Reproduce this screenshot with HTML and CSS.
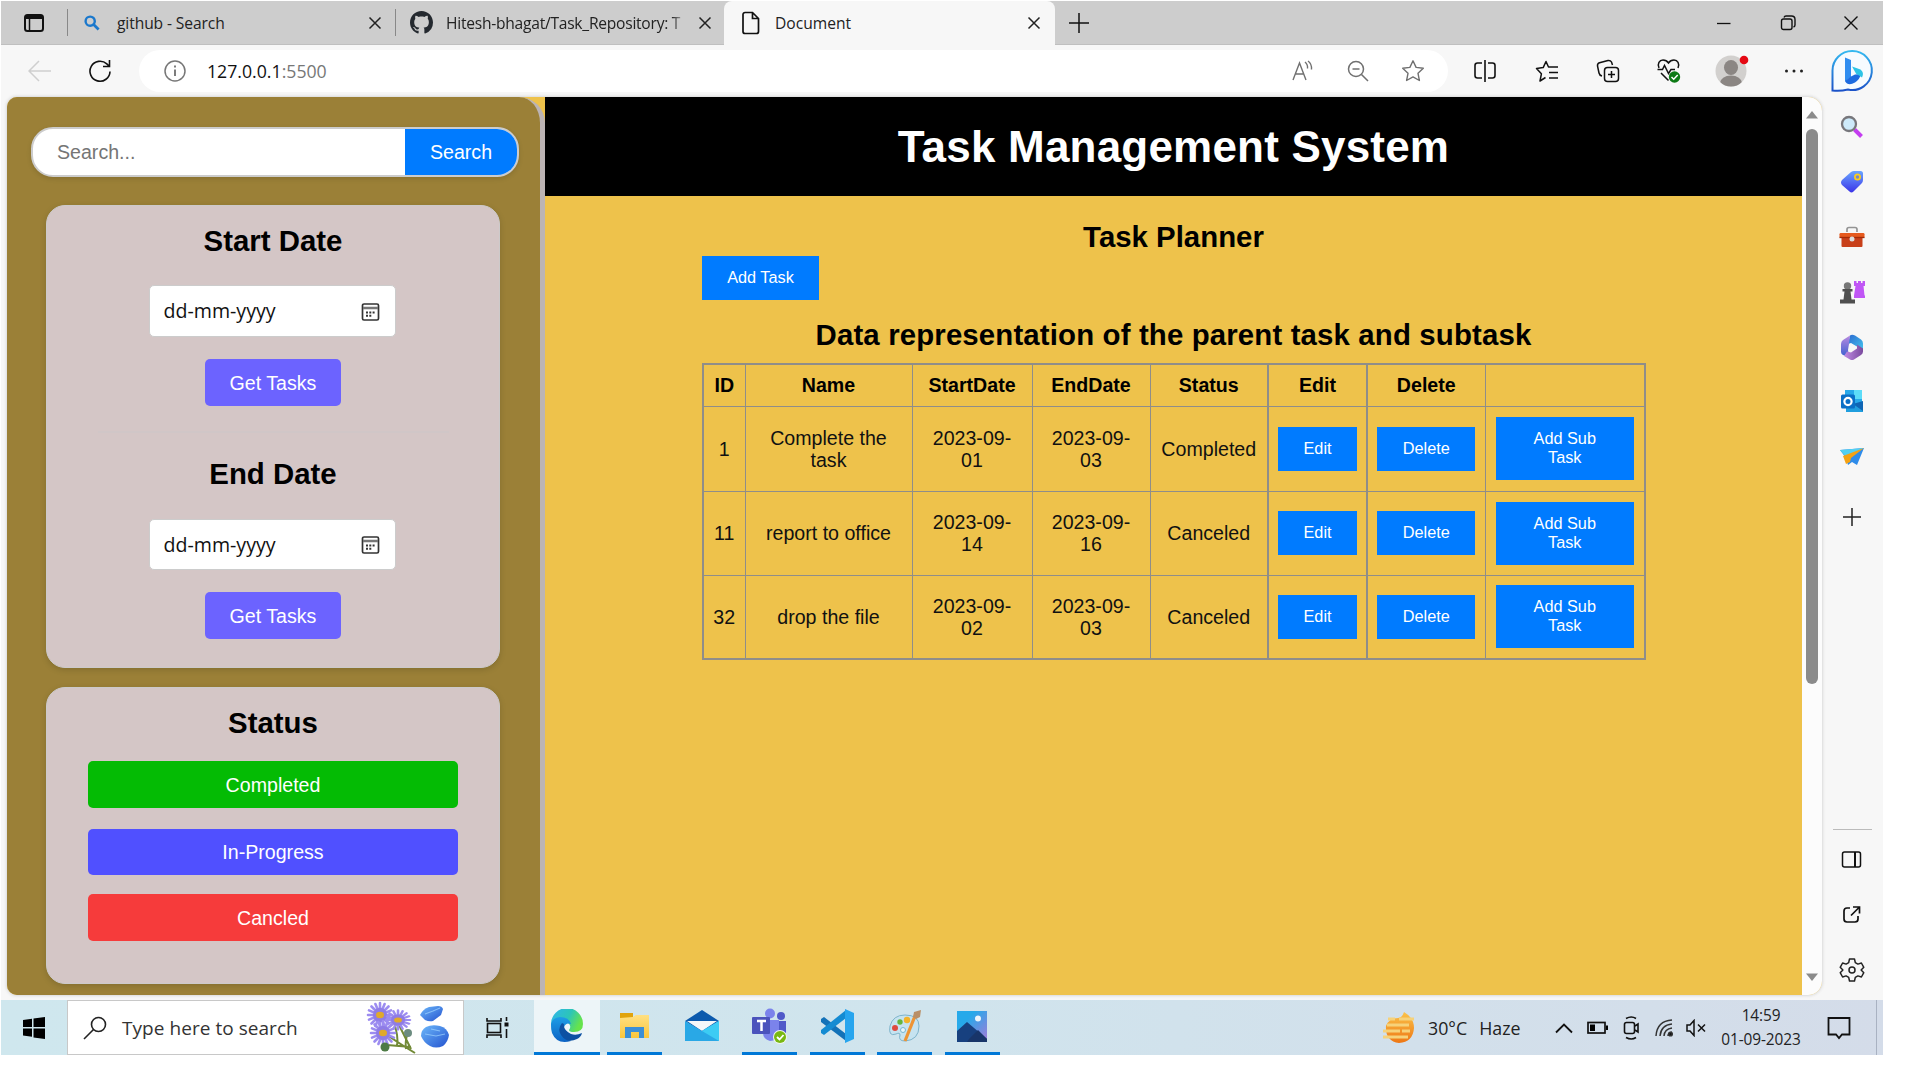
FILE: index.html
```html
<!DOCTYPE html>
<html lang="en">
<head>
<meta charset="utf-8">
<title>Document</title>
<link rel="stylesheet" href="styles.css">
</head>
<body>
<svg class="defs" width="0" height="0" aria-hidden="true">
  <defs>
    <symbol id="x" viewBox="0 0 14 14"><path d="M1.500 1.500l11 11M12.500 1.500l-11 11" fill="none" stroke="#222" stroke-width="1.500"/></symbol>
    <symbol id="cal" viewBox="0 0 20 22"><rect x="1.500" y="2" width="16" height="16" rx="1.500" fill="none" stroke="#333" stroke-width="1.700"/><path d="M2 6h15" stroke="#777" stroke-width="2.500"/><path d="M5 10.500h9M5 13.800h6" stroke="#333" stroke-width="2" stroke-dasharray="2 1.300"/></symbol>
    <linearGradient id="gBlue" x1="0" y1="0" x2="0" y2="1"><stop offset="0" stop-color="#6aa5ff"/><stop offset="1" stop-color="#3b34e8"/></linearGradient>
    <linearGradient id="gBing" x1="0" y1="0" x2="0" y2="1"><stop offset="0" stop-color="#35b9f0"/><stop offset="1" stop-color="#1b52c8"/></linearGradient>
    <linearGradient id="gOffA" x1="0" y1="0" x2="1" y2="1"><stop offset="0" stop-color="#2b6ad0"/><stop offset="1" stop-color="#44c4ee"/></linearGradient>
    <linearGradient id="gOffB" x1="0" y1="0" x2="0" y2="1"><stop offset="0" stop-color="#b98ae0"/><stop offset="1" stop-color="#3a5fd0"/></linearGradient>
    <linearGradient id="gOffC" x1="0" y1="0" x2="1" y2="0"><stop offset="0" stop-color="#c08be4"/><stop offset="1" stop-color="#7a4a9e"/></linearGradient>
    <linearGradient id="gEdge" x1="0" y1="0" x2="1" y2="0.400"><stop offset="0" stop-color="#2fb4ee"/><stop offset="0.600" stop-color="#2cc5b8"/><stop offset="1" stop-color="#66e34c"/></linearGradient>
    <linearGradient id="gEdge2" x1="0" y1="0" x2="0" y2="1"><stop offset="0" stop-color="#1d9de6"/><stop offset="1" stop-color="#0c63c4"/></linearGradient>
    <linearGradient id="gSun" x1="0" y1="0" x2="0" y2="1"><stop offset="0" stop-color="#fbc34a"/><stop offset="1" stop-color="#ee7714"/></linearGradient>
    <linearGradient id="gPhoto" x1="0" y1="0" x2="1" y2="1"><stop offset="0.300" stop-color="#26a9ea"/><stop offset="1" stop-color="#a67ad8"/></linearGradient>
    <linearGradient id="gFold" x1="0" y1="0" x2="0" y2="1"><stop offset="0" stop-color="#ffe082"/><stop offset="1" stop-color="#fbc63c"/></linearGradient>
    <linearGradient id="gStone" x1="0" y1="0" x2="1" y2="1"><stop offset="0" stop-color="#6cb8fa"/><stop offset="1" stop-color="#2352cf"/></linearGradient>
    <g id="petals"><path d="M0-12v24M-12 0h24M-8.500-8.500l17 17M8.500-8.500l-17 17M-4.600-11l9.200 22M4.600-11l-9.200 22M-11-4.600l22 9.200M-11 4.600l22-9.200" stroke="#9c8cf0" stroke-width="2.600" stroke-linecap="round"/><circle r="7" fill="#7f6bdc" opacity=".5"/><ellipse rx="4" ry="3.200" fill="#e0a92b"/></g>
  </defs>
</svg>

<div class="desktop">
  <header class="tabs">
    <div class="tab-menu"><svg width="22" height="20" viewBox="0 0 22 20"><rect x="2" y="2" width="18" height="16" rx="2.500" fill="none" stroke="#111" stroke-width="2"/><path d="M2 4h18" stroke="#111" stroke-width="4"/><path d="M6.500 5v13" stroke="#111" stroke-width="1.500"/></svg></div>
    <div class="tab tab-first">
      <svg class="fav" width="16" height="16" viewBox="0 0 16 16"><circle cx="6.200" cy="6.200" r="4.600" fill="none" stroke="#1b78cc" stroke-width="2.400"/><path d="M9.600 9.600l5 5" stroke="#1b78cc" stroke-width="2.800"/></svg>
      <span class="tab-title">github - Search</span><svg class="close" width="14" height="14"><use href="#x"/></svg>
    </div>
    <div class="tab tab-second">
      <svg class="fav" width="23" height="23" viewBox="0 0 16 16"><path fill="#24292f" d="M8 0C3.580 0 0 3.580 0 8c0 3.540 2.290 6.530 5.470 7.590.400.070.550-.170.550-.380 0-.190-.010-.820-.010-1.490-2.010.370-2.530-.490-2.690-.940-.090-.230-.480-.940-.820-1.130-.280-.150-.680-.520-.010-.530.630-.010 1.080.580 1.230.820.720 1.210 1.870.870 2.330.660.070-.520.280-.870.510-1.070-1.780-.200-3.640-.890-3.640-3.950 0-.870.310-1.590.820-2.150-.080-.200-.360-1.020.080-2.120 0 0 .670-.210 2.200.820.640-.180 1.320-.270 2-.270s1.360.090 2 .270c1.530-1.040 2.200-.820 2.200-.820.440 1.100.160 1.920.080 2.120.510.560.820 1.270.820 2.150 0 3.070-1.870 3.750-3.650 3.950.290.250.540.730.540 1.480 0 1.070-.010 1.930-.010 2.200 0 .210.150.460.550.380A8.010 8.010 0 0 0 16 8c0-4.420-3.580-8-8-8z"/></svg>
      <span class="tab-title fade">Hitesh-bhagat/Task_Repository: T</span><svg class="close" width="14" height="14"><use href="#x"/></svg>
    </div>
    <div class="tab tab-active">
      <svg class="fav" width="20" height="24" viewBox="0 0 20 24"><path d="M4 1.500h7.500l6 6v13a2 2 0 0 1-2 2H4a2 2 0 0 1-2-2v-17a2 2 0 0 1 2-2zM11.500 1.500v6h6" fill="none" stroke="#111" stroke-width="1.700"/></svg>
      <span class="tab-title">Document</span><svg class="close" width="14" height="14"><use href="#x"/></svg>
    </div>
    <div class="cell new-tab"><svg width="20" height="20"><path d="M10 0v20M0 10h20" stroke="#111" stroke-width="1.500"/></svg></div>
    <div class="window-buttons">
      <div class="cell"><svg width="14" height="14"><path d="M0 7.500h13.500" stroke="#111" stroke-width="1.300"/></svg></div>
      <div class="cell"><svg width="16" height="16" fill="none" stroke="#111" stroke-width="1.400"><rect x="1.500" y="4" width="10.500" height="10.500" rx="2"/><path d="M4 2.500Q4.500 1 6 1h5.500Q15 1 15 4.500V10q0 1.500-1.500 2"/></svg></div>
      <div class="cell"><svg width="16" height="16"><path d="M1.500 1.500l13 13M14.500 1.500l-13 13" stroke="#111" stroke-width="1.400"/></svg></div>
    </div>
  </header>

  <nav class="toolbar">
    <div class="cell"><svg width="24" height="22" fill="none" stroke="#cfcfcf" stroke-width="1.500"><path d="M1 11h22M11 1L1 11l10 10"/></svg></div>
    <div class="cell reload"><svg width="24" height="24" fill="none" stroke="#111" stroke-width="1.600"><path d="M22 12.500a10 10 0 1 1-3.200-7.600L21 7M21.500 1v6.500H15"/></svg></div>
    <div class="address">
      <svg width="24" height="24" fill="none" stroke="#777" stroke-width="1.500"><circle cx="12" cy="12" r="10"/><path d="M12 10.500v6.500M12 6.500v2" stroke-width="1.900"/></svg>
      <span class="url">127.0.0.1<em>:5500</em></span>
      <div class="cell"><svg width="24" height="24" fill="none" stroke="#707070" stroke-width="1.400"><path d="M2 21L8.500 4 15 21M4.500 15h8M14 3q3 2.500 2.500 6.500M17 2q4 3 3.500 8.500"/></svg></div>
      <div class="cell"><svg width="24" height="24" fill="none" stroke="#707070" stroke-width="1.500"><circle cx="10" cy="10" r="7.500"/><path d="M15.500 15.500L22 22M6.500 10h7"/></svg></div>
      <div class="cell"><svg width="24" height="24" fill="none" stroke="#707070" stroke-width="1.400" stroke-linejoin="round"><path d="M12 1.800l3.100 6.600 7.200.9-5.300 5 1.400 7.200-6.400-3.600-6.400 3.600L7 14.300l-5.300-5 7.200-.9z"/></svg></div>
    </div>
    <div class="cell"><svg width="24" height="24" fill="none" stroke="#111" stroke-width="1.600"><path d="M9 4H4.500Q2 4 2 6.500v10Q2 19 4.500 19H9M15 4h4.500Q22 4 22 6.500v10q0 2.500-2.500 2.500H15M12 1v22"/></svg></div>
    <div class="cell"><svg width="24" height="24" fill="none" stroke="#111" stroke-width="1.500" stroke-linejoin="round"><path d="M10.500 18.500L5 22l1.400-7.200L1.500 9.500l6.700-.9L11 2.500l2.500 5.500h9.500M14 13.500h9M14 19h9"/></svg></div>
    <div class="cell"><svg width="24" height="24" fill="none" stroke="#111" stroke-width="1.500"><rect x="8.500" y="8.500" width="14" height="14" rx="3"/><path d="M15.500 12v7M12 15.500h7M6 17Q3.500 16.500 3 14L1.500 7Q1.300 4.500 3.500 3.800L12 1.500q2.500-.3 3.500 1.500l1 3"/></svg></div>
    <div class="cell"><svg width="26" height="26" fill="none" stroke="#111" stroke-width="1.500"><path d="M3 10C1 5.500 3.500 2 7 2q3.500 0 5.500 3 2-3 5.500-3c3.500 0 6 3.500 4 8M1.500 11.500h5l2-4 4 8 2.500-4h4M5 15l7.500 7.500"/><circle cx="18.500" cy="19" r="5.700" fill="#0d7a15" stroke="none"/><path d="M15.500 19l2.200 2.200 4-4.200" stroke="#fff"/></svg></div>
    <div class="cell"><svg width="36" height="38" viewBox="0 0 36 38"><clipPath id="av"><circle cx="18" cy="19" r="15.500"/></clipPath><circle cx="18" cy="19" r="15.500" fill="#d2d0ce"/><g clip-path="url(#av)" fill="#8b8683"><ellipse cx="18" cy="15.500" rx="7" ry="7.500"/><ellipse cx="18" cy="31" rx="11" ry="7.500"/></g><circle cx="31" cy="8" r="4.300" fill="#e50914"/></svg></div>
    <div class="cell"><svg width="20" height="6" fill="#222"><circle cx="2.500" cy="3" r="1.500"/><circle cx="10" cy="3" r="1.500"/><circle cx="17.500" cy="3" r="1.500"/></svg></div>
    <div class="cell"><svg width="44" height="44" viewBox="0 0 44 44"><path d="M22 2a19.500 19.500 0 1 1-4 38.500Q10 42.500 2.500 41.500V21.500A19.500 19.500 0 0 1 22 2z" fill="#f6fbff" stroke="url(#gBing)" stroke-width="2"/><path d="M15 8.500l6 2.500v17l-6 4.500z" fill="#2f8df0"/><path d="M15 32l6-4.500 4-2 6-.5q-1 5-6 8.500-7 4-10-1.500z" fill="#1d6be0"/><path d="M22 17.500l8.500 3q4 3 1.500 8l-6-4z" fill="#2cc3e6"/></svg></div>
  </nav>

  <div class="middle">
    <div class="viewport">
      <aside class="sidebar">
        <div class="search"><span class="placeholder">Search...</span><span class="search-button">Search</span></div>
        <section class="card dates">
          <h2>Start Date</h2>
          <div class="date"><span>dd-mm-yyyy</span><svg width="20" height="22"><use href="#cal"/></svg></div>
          <div class="get">Get Tasks</div>
          <hr>
          <h2>End Date</h2>
          <div class="date date-end"><span>dd-mm-yyyy</span><svg width="20" height="22"><use href="#cal"/></svg></div>
          <div class="get">Get Tasks</div>
        </section>
        <section class="card status">
          <h2>Status</h2>
          <div class="state completed">Completed</div>
          <div class="state progress">In-Progress</div>
          <div class="state canceled">Cancled</div>
        </section>
      </aside>
      <main class="main">
        <h1>Task Management System</h1>
        <div class="planner">
          <h2>Task Planner</h2>
          <span class="btn add">Add Task</span>
          <h2 class="data-title">Data representation of the parent task and subtask</h2>
          <table>
            <colgroup><col class="c-id"><col class="c-name"><col class="c-start"><col class="c-end"><col class="c-status"><col class="c-edit"><col class="c-delete"><col class="c-sub"></colgroup>
            <tr class="head"><th>ID</th><th>Name</th><th>StartDate</th><th>EndDate</th><th>Status</th><th class="thick">Edit</th><th class="thick">Delete</th><th></th></tr>
            <tr class="first"><td>1</td><td>Complete the<br>task</td><td>2023-09-<br>01</td><td>2023-09-<br>03</td><td>Completed</td><td class="thick"><span class="btn edit">Edit</span></td><td class="thick"><span class="btn delete">Delete</span></td><td><span class="btn sub">Add Sub<br>Task</span></td></tr>
            <tr><td>11</td><td>report to office</td><td>2023-09-<br>14</td><td>2023-09-<br>16</td><td>Canceled</td><td class="thick"><span class="btn edit">Edit</span></td><td class="thick"><span class="btn delete">Delete</span></td><td><span class="btn sub">Add Sub<br>Task</span></td></tr>
            <tr><td>32</td><td>drop the file</td><td>2023-09-<br>02</td><td>2023-09-<br>03</td><td>Canceled</td><td class="thick"><span class="btn edit">Edit</span></td><td class="thick"><span class="btn delete">Delete</span></td><td><span class="btn sub">Add Sub<br>Task</span></td></tr>
          </table>
        </div>
      </main>
      <div class="scrollbar">
        <svg width="12" height="8"><path d="M0 7.500L6 0l6 7.500z" fill="#8b8b8b"/></svg>
        <div class="thumb"></div>
        <svg width="12" height="8"><path d="M0 .5L6 8l6-7.500z" fill="#8b8b8b"/></svg>
      </div>
    </div>
    <div class="edge-bar">
      <div class="cell"><svg width="26" height="26"><path d="M15.500 15.500l7 7" stroke="#c43df0" stroke-width="4"/><circle cx="10" cy="10" r="7" fill="#cdeafa" stroke="#77777c" stroke-width="2.300"/></svg></div>
      <div class="cell"><svg width="26" height="26"><path d="M3 11l9-8q1.500-1 3-1h6.500q2.500 0 2.500 2.500V11q0 2-1.500 3.500l-8 8q-2 2-4 0L3 16q-2-2.500 0-5z" fill="url(#gBlue)"/><circle cx="18.500" cy="8" r="2.600" fill="#7588c8" stroke="#f8cc20" stroke-width="1.800"/></svg></div>
      <div class="cell"><svg width="26" height="26"><path d="M8 8V5.500Q8 3.500 10 3.500h6q2 0 2 2V8" fill="none" stroke="#949494" stroke-width="1.700"/><rect x="2.500" y="12" width="21" height="11" rx="1" fill="#c8401a"/><rect x=".5" y="9" width="25" height="5" rx="1.200" fill="#e65a1e"/><path d="M.5 13.500h25" stroke="#a32b08" stroke-width="1.300"/><circle cx="13" cy="15" r="2.500" fill="#ddd"/></svg></div>
      <div class="cell"><svg width="28" height="28"><path d="M16 3h2.500v2H20V3h3v2h1.500V3H27v5h-1.500l1 9.500H27V20H16v-2.500l1.500-9.500H16z" fill="#c056f5"/><circle cx="9.500" cy="8" r="3.700" fill="#777"/><path d="M4.500 11h10v2.500h-2l1 8H17v4H2v-4h3.500l1-8h-2z" fill="#4f4f4f"/></svg></div>
      <div class="cell"><svg width="26" height="28" viewBox="0 0 26 28"><path d="M11 2.500q2-1.500 5 0l6 4q2 1.500 2 4V17l-7-4-5-3-3 1z" fill="url(#gOffA)"/><path d="M11 2.500L4 7q-2 1.500-2 4v8q0 2 2 3l6 2-1-7 1-6z" fill="url(#gOffB)"/><path d="M8 18.500l4 1 6-4v-4l6 4v3q0 2-2 3.500l-7 4.500q-2 1-4 0L5 23z" fill="url(#gOffC)"/></svg></div>
      <div class="cell"><svg width="26" height="26"><rect x="6" y="1" width="17" height="13" fill="#27a9ea"/><path d="M15 1h8v9h-8z" fill="#5cdcf8"/><path d="M7 14h17v9H7z" fill="#209ede"/><path d="M24 12v10L14 15z" fill="#0f65b4"/><rect x="2" y="5.500" width="14" height="14" rx="1.500" fill="#0a6fc6"/><circle cx="9" cy="12.500" r="3.600" fill="none" stroke="#fff" stroke-width="2.200"/></svg></div>
      <div class="cell"><svg width="26" height="24"><path d="M1 5l24-2-7 17-5-3-4 3-2-7z" fill="#2f8cea"/><path d="M1 5l24-2-18 9z" fill="#53d0f2"/><path d="M4 11L25 3 12 13l-1 4-4 2z" fill="#f5a214"/></svg></div>
      <div class="cell tall"><svg width="18" height="18"><path d="M9 0v18M0 9h18" stroke="#222" stroke-width="1.500"/></svg></div>
      <div class="edge-tools">
        <div class="cell"><svg width="22" height="20" fill="none" stroke="#111" stroke-width="1.500"><rect x="1.500" y="2" width="18" height="15" rx="2"/><path d="M14 2v15" stroke-width="2"/></svg></div>
        <div class="cell"><svg width="20" height="20" fill="none" stroke="#111" stroke-width="1.700"><path d="M8 3H5Q2 3 2 6v8q0 3 3 3h8q3 0 3-3v-3M11 2h6.500v6.500M17 2.500l-8 8"/></svg></div>
        <div class="cell"><svg width="26" height="26" viewBox="0 0 26 26" fill="none" stroke="#222" stroke-width="1.500" stroke-linejoin="round"><circle cx="13" cy="13" r="3"/><path d="M10.500 2h5l.8 3.600 2.600 1.500 3.500-1.100 2.400 4.300-2.700 2.700 2.700 2.700-2.400 4.300-3.500-1.100-2.600 1.500-.8 3.600h-5l-.8-3.600-2.600-1.500L3.600 20l-2.400-4.300L3.900 13l-2.700-2.700L3.600 6l3.500 1.100 2.600-1.500z"/></svg></div>
      </div>
    </div>
  </div>

  <footer class="taskbar">
    <div class="cell start"><svg width="24" height="24"><path d="M1 4l9-1.200V11H1zM11.500 2.600L23 1v10H11.500zM1 12.500h9v8.200L1 19.500zM11.500 12.500H23V23l-11.500-1.600z"/></svg></div>
    <div class="win-search">
      <svg width="24" height="24" fill="none" stroke="#222" stroke-width="1.600"><circle cx="15.500" cy="8.500" r="7"/><path d="M10.500 13.500L1 23"/></svg>
      <span class="prompt">Type here to search</span>
      <svg class="flowers" width="90" height="53" viewBox="0 0 90 53"><g fill="none" stroke="#728a36" stroke-width="2"><path d="M17 30q10 8 33 22M28 18q6 18 4 27M34 24l12 24M42 34q-2 8-1 14M22 44l24 2"/></g><use href="#petals" x="15" y="14"/><use href="#petals" transform="translate(33 19) scale(1 .8)"/><use href="#petals" x="18" y="32"/><circle cx="20" cy="46" r="4.500" fill="#4d7b45"/><circle cx="43" cy="32" r="4" fill="#6c8c80"/><path d="M55 14q3-6 9-8l9-1q4 0 5 3l-2 6-8 6q-4 1-8-1z" fill="url(#gStone)"/><path d="M56 35q0-6 5-9 6-3 14-1 7 2 9 9-1 7-6 11-7 3-13 0-6-3-9-10z" fill="url(#gStone)"/><path d="M60 13l8-3 7-3M60 33l11 2 9-2M66 28l9 2" stroke="#a0d4ff" stroke-width="1.200" fill="none" opacity=".7"/></svg>
    </div>
    <div class="cell view"><svg width="24" height="22" fill="none" stroke="#111" stroke-width="1.600"><path d="M1 1v3h14V1M1 21v-3h14v3"/><rect x="1.500" y="6.500" width="13" height="9"/><path d="M20.500 0v4M20.500 12v9"/><path d="M20.500 5.500v4" stroke-width="4"/></svg></div>
    <div class="cell app active"><svg width="34" height="34" viewBox="0 0 34 34"><path d="M1 15A16 16 0 0 1 33 15q0 8-9 8-5 0-5-2 3-4-1-7-6-4-12 1-4 3-4 8z" fill="url(#gEdge)"/><path d="M1 15q1-6 9-7 9 0 11 7-5-2-7 3-2 9 7 14-14 4-19-8-1-4-1-9z" fill="url(#gEdge2)"/><path d="M12 14q-5 6-1 12 6 9 16 4 4-2 5-6-6 3-11 1-8-4-7-10z" fill="#0d51a3"/></svg></div>
    <div class="cell app open"><svg width="30" height="28"><path d="M0 1h13v5H0z" fill="#e0a30c"/><path d="M0 6l13-1 3-2h13v23H0z" fill="url(#gFold)"/><path d="M5 15h19v11h-5v-6h-8v6H5z" fill="#3c8fd6"/></svg></div>
    <div class="cell app"><svg width="34" height="32"><path d="M0 11L17 0l17 11-17 11z" fill="#0c5aad"/><path d="M2 11h30L17 21z" fill="#f5f7f9"/><path d="M0 11l17 10 17-10v20H0z" fill="#29a8e6"/><path d="M34 11v20L17 21z" fill="#3cccf4"/></svg></div>
    <div class="cell app open"><svg width="38" height="36" viewBox="0 0 38 36"><circle cx="19" cy="5.500" r="5" fill="#7b83eb"/><circle cx="30" cy="8" r="4" fill="#5059c9"/><path d="M25 13h10v12q-3 6-10 3z" fill="#5059c9"/><path d="M12 12h16v14q-2 7-9 7-7-2-7-8z" fill="#7b83eb"/><rect x="1" y="9" width="18" height="17" rx="1" fill="#4b53bc"/><path d="M6 13h9M10.500 13v10" stroke="#fff" stroke-width="2.500"/><circle cx="29" cy="29" r="7" fill="#f1f5ee"/><circle cx="29" cy="29" r="6" fill="#79b811"/><path d="M26 29l2.500 2.500 4-4.500" fill="none" stroke="#fff" stroke-width="1.800"/></svg></div>
    <div class="cell app open"><svg width="34" height="34"><path d="M1 10l3-2 22 17v7L1 13z" fill="#1372b8"/><path d="M1 24l3 2L26 9V1L1 21z" fill="#148bd2"/><path d="M25 0l9 4v26l-9 4z" fill="#27a5ee"/></svg></div>
    <div class="cell app open"><svg width="34" height="34"><path d="M2 17Q5 6 17 6q14 0 14 11 0 14-14 15-7 0-5-6 0-3-4-1-8 3-6-8z" fill="#c6e3f0" stroke="#7db3cb"/><circle cx="7" cy="19" r="3" fill="#de4a40"/><circle cx="12" cy="13" r="2.700" fill="#65b63e"/><circle cx="19" cy="11" r="3.200" fill="#f3b32a"/><circle cx="15" cy="21" r="2.500" fill="#e9f6fb" stroke="#79b6d0"/><path d="M17 32L27 7" stroke="#ed9434" stroke-width="3.200"/><path d="M25 8l1-5 7-2-1 7-4 2z" fill="#b98f67"/></svg></div>
    <div class="cell app open"><svg width="30" height="31"><path d="M0 0h30v31H0z" fill="url(#gPhoto)"/><path d="M0 20L10 11l20 17v3H0z" fill="#17407f"/><path d="M12 28l9-9 9 9v3H10z" fill="#183569"/><circle cx="21" cy="7.500" r="3" fill="#eef6fb"/></svg></div>
    <div class="weather"><svg width="34" height="34"><path d="M4 15q3-8 12-8 4 0 6-6 10 6 10 16-1 14-15 15Q3 30 4 15z" fill="url(#gSun)"/><path d="M6 8h7M17 8h15M5 14h22M1 20h17M20 20h8M1 26h25" stroke="#f6d27a" stroke-width="3"/></svg><span>30°C</span><span>Haze</span></div>
    <div class="tray">
      <div class="cell"><svg width="18" height="12" fill="none" stroke="#111" stroke-width="1.800"><path d="M1 10.500l8-8 8 8"/></svg></div>
      <div class="cell"><svg width="22" height="14"><rect x="1" y="1.500" width="17" height="10.500" fill="none" stroke="#111" stroke-width="1.700"/><path d="M3 3.500h5v6.500H3zM19 4.500h2v4.500h-2z"/></svg></div>
      <div class="cell"><svg width="18" height="24" fill="none" stroke="#111" stroke-width="1.600"><rect x="1.500" y="6.500" width="10" height="11" rx="2"/><path d="M12 10l3-2v8l-3-2M3 2.500q5.500-3 10 0M3 21.500q5.500 3 10 0"/></svg></div>
      <div class="cell"><svg width="20" height="20" fill="none" stroke="#333" stroke-width="1.500"><path d="M1 18Q2 3 17 2M5 18Q6 7 17 6M9 18Q9.500 11 17 10M13 18q0-3 4-4"/><circle cx="15.500" cy="16" r="1.800" fill="#111"/></svg></div>
      <div class="cell"><svg width="22" height="18" fill="none" stroke="#111" stroke-width="1.500"><path d="M1 6h3l4-4.500v15L4 12H1zM12 5.500l7 7M19 5.500l-7 7"/></svg></div>
    </div>
    <div class="clock"><span>14:59</span><span>01-09-2023</span></div>
    <div class="cell notice"><svg width="24" height="24" fill="none" stroke="#111" stroke-width="1.800"><path d="M1.500 2h21v16.500H15l-3 3.500-3-3.500H1.500z"/></svg></div>
    <div class="peek"></div>
  </footer>
</div>
</body>
</html>
```
FILE: styles.css
```css
* { box-sizing: border-box; }
body { margin: 0; background: #fff; font-family: "Liberation Sans", Arial, sans-serif; overflow: hidden; }
h1, h2 { margin: 0; }
svg { display: block; flex: none; }
.defs { position: absolute; }
.cell { display: flex; align-items: center; justify-content: center; }
.desktop { width: 1882px; height: 1054px; margin: 1px; display: flex; flex-direction: column; background: #f7f7f7; }

/* Tab strip */
.tabs { height: 44px; display: flex; background: #cdcdcd; border-bottom: 1px solid #bfbfbf; font: 15.6px/22px "Open Sans", sans-serif; color: #222; }
.tab-menu { width: 66px; display: flex; align-items: center; padding-left: 22px; }
.tab { display: flex; align-items: center; }
.tab-title { flex: 1; white-space: nowrap; }
.tab-first { width: 329px; padding: 0 13px 0 16px; margin: 8px 0; border-left: 1px solid #888; border-right: 1px solid #888; }
.tab-first .tab-title { margin-left: 17px; letter-spacing: -.1px; }
.tab-second { width: 328px; padding: 0 12px 0 14px; }
.tab-second .tab-title { margin: 0 12px 0 13px; letter-spacing: -.25px; }
.fade { -webkit-mask-image: linear-gradient(90deg, #000 94%, transparent); mask-image: linear-gradient(90deg, #000 94%, transparent); }
.tab-active { width: 331px; height: 44px; padding: 0 14px 0 17px; background: #f7f7f7; border-radius: 8px 8px 0 0; }
.tab-active .tab-title { margin-left: 14px; }
.new-tab { width: 47px; }
.window-buttons { margin-left: auto; display: grid; grid-template-columns: 64px 63px 64px; }

/* Address row */
.toolbar { height: 52px; display: grid; grid-template-columns: 78px 42px 1333px 62px 62px 60px 61px 64px 62px 54px; align-items: center; }
.address { width: 1309px; height: 42px; margin-left: 18px; display: flex; align-items: center; background: #fff; border-radius: 21px; padding: 0 8px 0 24px; }
.address .cell { width: 55px; }
.url { flex: 1; margin-left: 20px; font: 17.7px/24px "Open Sans", sans-serif; color: #111; }
.url em { font-style: normal; color: #777; }

/* Page and side rail */
.middle { height: 898px; display: flex; padding-left: 6px; }
.viewport { width: 1815px; display: flex; background: #eec24b; border-radius: 10px 14px 14px 10px; overflow: hidden; box-shadow: 0 0 3px 1px #d9d9d9; }
.sidebar { width: 538px; background: #9b8037; border-right: 5px solid #bcb4b4; border-radius: 0 26px 0 0; padding: 30px 21px 0 24px; }
.search { height: 50px; display: flex; border: 2px solid #ccc; border-radius: 22px; overflow: hidden; background: #fff; font-size: 19.6px; line-height: 46px; box-shadow: 0 2px 5px rgba(0,0,0,.12); }
.placeholder { flex: 1; padding-left: 24px; color: #757575; }
.search-button { width: 112px; text-align: center; background: #007bff; color: #fff; }
.card { width: 454px; margin-left: 15px; background: #d4c6c6; border: 1px solid #cccaca; border-radius: 19px; box-shadow: 0 2px 6px rgba(0,0,0,.15); display: flex; flex-direction: column; align-items: center; padding-top: 18px; }
h2 { font-size: 29.4px; line-height: 34px; text-align: center; color: #000; }
.dates { height: 463px; margin-top: 28px; }
.date { width: 247px; height: 52px; margin: 27px 2px 0 0; border: 1px solid #ccc; border-radius: 5px; background: #fff; display: flex; align-items: center; justify-content: space-between; padding: 0 14px; font: 19.6px/26px "Open Sans", sans-serif; color: #111; }
.date svg { margin-top: 3px; }
.get { width: 136px; height: 47px; margin-top: 22px; border-radius: 5px; background: #6c63ff; color: #fff; font-size: 19.6px; line-height: 48px; text-align: center; }
.dates hr { width: 351px; height: 2px; margin: 25px 0 24px; border: 0; background: #d0c6c7; }
.date-end { height: 51px; margin-top: 28px; }
.date-end + .get { margin-top: 22px; }
.status { height: 297px; margin-top: 19px; }
.state { width: 370px; height: 47px; border-radius: 5px; color: #fff; font-size: 19.6px; line-height: 48px; text-align: center; }
.completed { margin-top: 21px; background: #04bb04; }
.progress { margin-top: 21px; height: 46px; line-height: 46px; background: #5050ff; }
.canceled { margin-top: 19px; background: #f63b3b; }

.main { width: 1257px; }
h1 { height: 99px; display: flex; align-items: center; justify-content: center; background: #000; color: #fff; font-size: 44px; letter-spacing: .2px; }
.planner { width: 943px; margin: 24px 0 0 157px; }
.btn { display: block; background: #007bff; color: #fff; font-size: 16.3px; line-height: 19px; text-align: center; padding: 12px 0 13px; margin: 0 auto; }
.add { width: 117px; margin: 2px 0 18px; }
.data-title { letter-spacing: .14px; }
table { width: 942px; margin-top: 11px; table-layout: fixed; border-collapse: collapse; border: 2px solid #8f8d89; font-size: 19.6px; line-height: 22px; text-align: center; color: #111; }
th, td { padding: 0; border: 1px solid #8f8d89; }
th { color: #000; }
.thick { border-left-width: 2px; }
tr { height: 84px; }
.head { height: 42px; }
.first { height: 85px; }
.c-id { width: 42px; }
.c-name { width: 167px; }
.c-start { width: 120px; }
.c-end { width: 118px; }
.c-status { width: 118px; }
.c-edit { width: 99px; }
.c-delete { width: 118px; }
.c-sub { width: 160px; }
.edit { width: 79px; }
.delete { width: 98px; }
.sub { width: 138px; }

.scrollbar { width: 20px; background: #fcfcfc; display: flex; flex-direction: column; align-items: center; padding: 14px 0; }
.thumb { width: 12px; height: 555px; margin: 10px 0 auto; border-radius: 6px; background: #8b8b8b; }
.edge-bar { width: 61px; display: flex; flex-direction: column; padding: 2px 0 0; }
.edge-bar .cell { height: 55px; padding-right: 1px; }
.edge-bar .tall { height: 65px; }
.edge-tools { width: 39px; height: 166px; margin: auto 0 0 11px; border-top: 1px solid #bbb; padding-top: 3px; }

/* Windows taskbar */
.taskbar { height: 55px; margin-top: 5px; display: flex; background: linear-gradient(90deg, #cfe7ee, #d0e4ed 50%, #d4dce9); }
.edge-tools .cell:first-child { height: 54px; }
.start { width: 66px; }
.win-search { width: 397px; display: flex; align-items: center; background: #fff; border: 1px solid #c8c8c8; padding-left: 15px; }
.prompt { flex: 1; margin-left: 15px; font: 19px/24px "Open Sans", sans-serif; letter-spacing: .05px; color: #333; white-space: nowrap; }
.flowers { margin-right: 8px; }
.view { width: 70px; padding-right: 3px; }
.app { width: 55px; margin-right: 12.500px; border-bottom: 3px solid transparent; }
.open { border-bottom-color: #0078d7; }
.active { width: 66px; margin-right: 7px; background: #edf5f8; border-bottom-color: #0078d7; }
.weather { width: 164px; margin-left: auto; display: flex; align-items: center; font: 17.8px/24px "Open Sans", sans-serif; color: #222; }
.weather span { margin-left: 12px; }
.tray { display: grid; grid-template-columns: 34px 34px 34px 32px 32px; padding-left: 1px; }
.clock { width: 88px; margin-left: 4px; display: flex; flex-direction: column; align-items: center; justify-content: center; font: 15.4px/24px "Open Sans", sans-serif; color: #222; letter-spacing: -.1px; }
.notice { width: 68px; }
.peek { width: 7px; margin-left: 3px; border-left: 1px solid #a9b2c2; }
```
